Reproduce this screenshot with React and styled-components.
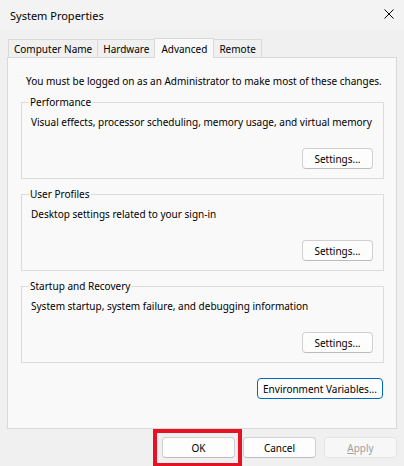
import styled, { createGlobalStyle } from 'styled-components';

const GlobalStyle = createGlobalStyle`
  html, body {
    margin: 0;
    padding: 0;
  }
  body {
    background: #f0f0f0;
    font-family: "Noto Sans", "Liberation Sans", sans-serif;
    font-size: 10px;
    color: #000;
  }
`;

const Window = styled.div`
  width: 404px;
  height: 466px;
  background: #f0f0f0;
  display: flex;
  flex-direction: column;
  overflow: hidden;
`;

const TitleBar = styled.div`
  height: 30px;
  flex-shrink: 0;
  background: #f3f3f3;
  display: flex;
  align-items: center;
  justify-content: space-between;
  padding: 0 10px;
  font-size: 11px;
`;

const CloseIcon = styled.svg`
  width: 10px;
  height: 10px;
  margin-top: -2px;
`;

const TabStrip = styled.div`
  display: flex;
  align-items: flex-end;
  height: 20px;
  margin: 7px 0 0 8px;
`;

const Tab = styled.div`
  position: relative;
  height: ${({ active }) => (active ? '20px' : '18px')};
  margin-left: -1px;
  margin-bottom: ${({ active }) => (active ? '-1px' : '0')};
  padding: 0 ${({ active }) => (active ? '6px' : '5px')};
  box-sizing: border-box;
  display: flex;
  align-items: center;
  border: 1px solid #d9d9d9;
  border-bottom: none;
  background: ${({ active }) => (active ? '#f9f9f9' : '#f0f0f0')};
  z-index: ${({ active }) => (active ? 1 : 0)};

  &:first-child {
    margin-left: 0;
  }
`;

const Panel = styled.div`
  margin: 0 7px;
  height: 372px;
  box-sizing: border-box;
  border: 1px solid #d9d9d9;
  background: #f9f9f9;
  padding: 15px 12px 0 13px;
  display: flex;
  flex-direction: column;
`;

const Notice = styled.div`
  line-height: 16px;
  padding-left: 5px;
`;

const Group = styled.fieldset`
  width: 363px;
  box-sizing: border-box;
  margin: ${({ first }) => (first ? '5px' : '7px')} 0 0;
  padding: 0 10px 9px 9px;
  border: 1px solid #dcdcdc;
  min-width: 0;
`;

const GroupLabel = styled.legend`
  display: block;
  height: 16px;
  padding: 0 1px;
  margin-left: -2px;
  line-height: 16px;
`;

const Description = styled.div`
  margin-top: 4px;
  height: 16px;
  line-height: 16px;
`;

const ButtonRow = styled.div`
  display: flex;
  justify-content: flex-end;
  gap: ${({ gap }) => gap || 0}px;
  margin-top: ${({ top }) => top || 0}px;
`;

const Button = styled.button`
  position: relative;
  width: ${({ wide }) => (wide ? '126px' : '71px')};
  height: 21px;
  padding: 0;
  box-sizing: border-box;
  font-family: inherit;
  font-size: 10px;
  color: ${({ disabled }) => (disabled ? '#a0a0a0' : '#000')};
  background: ${({ disabled }) => (disabled ? '#f7f7f7' : '#fdfdfd')};
  border: 1px solid ${({ focused, disabled }) =>
    focused ? '#0067c0' : disabled ? '#e5e5e5' : '#d0d0d0'};
  border-bottom-color: ${({ focused, disabled }) =>
    focused ? '#0067c0' : disabled ? '#e5e5e5' : '#bcbcbc'};
  border-radius: 4px;
`;

const DialogButton = styled(Button)`
  width: 73px;
`;

const Underline = styled.span`
  text-decoration: underline;
`;

const EnvRow = styled(ButtonRow)`
  margin-right: 1px;
`;

const Footer = styled(ButtonRow)`
  padding-right: 7px;
`;

const Highlight = styled.div`
  position: relative;

  &::after {
    content: '';
    position: absolute;
    left: -9px;
    right: -7px;
    top: -8px;
    bottom: -9px;
    border: 4px solid #e81123;
    pointer-events: none;
  }
`;

const groups = [
  {
    title: 'Performance',
    text: 'Visual effects, processor scheduling, memory usage, and virtual memory',
  },
  {
    title: 'User Profiles',
    text: 'Desktop settings related to your sign-in',
  },
  {
    title: 'Startup and Recovery',
    text: 'System startup, system failure, and debugging information',
  },
];

const tabs = ['Computer Name', 'Hardware', 'Advanced', 'Remote'];

export default function App() {
  return (
    <>
      <GlobalStyle />
      <Window>
        <TitleBar>
          <span>System Properties</span>
          <CloseIcon viewBox="0 0 10 10">
            <path d="M0.5 0.5 L9.5 9.5 M9.5 0.5 L0.5 9.5" stroke="#000" strokeWidth="1" fill="none" />
          </CloseIcon>
        </TitleBar>

        <TabStrip>
          {tabs.map((t) => (
            <Tab key={t} active={t === 'Advanced'}>{t}</Tab>
          ))}
        </TabStrip>

        <Panel>
          <Notice>You must be logged on as an Administrator to make most of these changes.</Notice>
          {groups.map((g, i) => (
            <Group key={g.title} first={i === 0}>
              <GroupLabel>{g.title}</GroupLabel>
              <Description>{g.text}</Description>
              <ButtonRow top={18}>
                <Button>Settings...</Button>
              </ButtonRow>
            </Group>
          ))}
          <EnvRow top={15}>
            <Button wide focused>Environment Variables...</Button>
          </EnvRow>
        </Panel>

        <Footer top={8} gap={8}>
          <Highlight>
            <DialogButton>OK</DialogButton>
          </Highlight>
          <DialogButton>Cancel</DialogButton>
          <DialogButton disabled>
            <Underline>A</Underline>pply
          </DialogButton>
        </Footer>
      </Window>
    </>
  );
}
